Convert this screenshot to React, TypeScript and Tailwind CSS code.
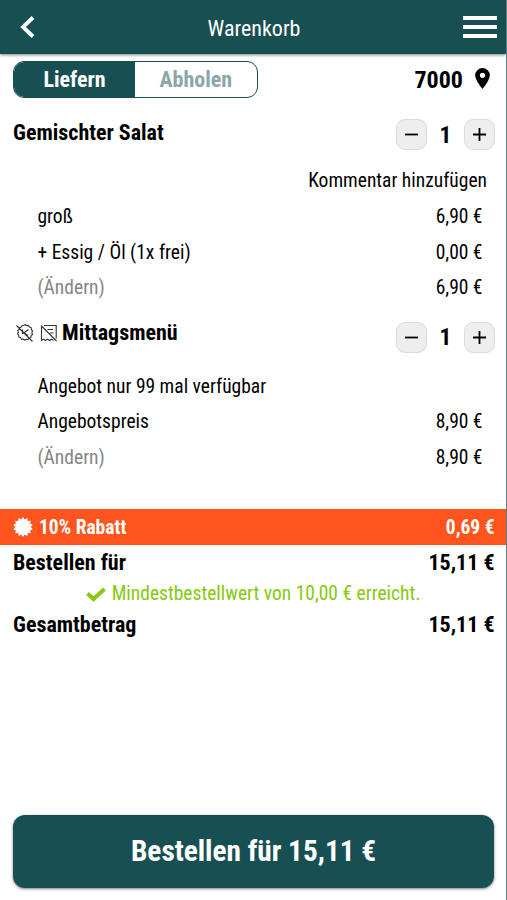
import type { ReactNode } from 'react';

function Stepper({ count }: { count: number }) {
  return (
    <div className="flex items-center">
      <button className="flex h-[31px] w-[31px] items-center justify-center rounded-[9px] border border-[#dcdcdc] bg-[#eeeeee]">
        <svg width="15" height="15" viewBox="0 0 15 15" stroke="#000" strokeWidth="1.8">
          <path d="M1 7.5h13" />
        </svg>
      </button>
      <span className="w-[37px] pt-[2px] text-center text-[23.5px] leading-none font-bold">{count}</span>
      <button className="flex h-[31px] w-[31px] items-center justify-center rounded-[9px] border border-[#dcdcdc] bg-[#eeeeee]">
        <svg width="15" height="15" viewBox="0 0 15 15" stroke="#000" strokeWidth="1.8">
          <path d="M1 7.5h13M7.5 1v13" />
        </svg>
      </button>
    </div>
  );
}

function ItemRow({ label, price, muted }: { label: ReactNode; price?: string; muted?: boolean }) {
  return (
    <div className="flex h-[35.5px] items-center justify-between pr-[23.5px] pl-[37.5px]">
      <span className={muted ? 'text-[#858585]' : ''}>{label}</span>
      <span>{price}</span>
    </div>
  );
}

function TotalRow({ label, price }: { label: string; price: string }) {
  return (
    <div className="flex h-8 items-center justify-between pr-[11.5px] pl-[13px] text-[22px] font-bold">
      <span>{label}</span>
      <span>{price}</span>
    </div>
  );
}

// round badge with a serrated edge
function SealIcon() {
  const points = Array.from({ length: 28 }, (_, i) => {
    const r = i % 2 ? 7.8 : 10;
    const a = (i * Math.PI) / 14 - Math.PI / 2;
    return `${(10 + r * Math.cos(a)).toFixed(2)},${(10 + r * Math.sin(a)).toFixed(2)}`;
  }).join(' ');
  return (
    <svg width="20" height="20" viewBox="0 0 20 20" fill="#fff">
      <polygon points={points} />
    </svg>
  );
}

function NoDiscountIcon() {
  return (
    <svg width="18" height="20" viewBox="0 0 18 20" fill="none" stroke="#333" strokeWidth="1.1">
      <path d="M9 1.500q1.500 1.600 3.400 1 .8 1.900 2.800 2.200-.3 2 1.300 3.300Q15.300 10 16.500 11.500q-1.800 1-1.700 3-2 .1-2.800 2-1.800-.8-3.200.6-1.400-1.400-3.300-.8-.6-2-2.600-2.300.3-2-1.300-3.200Q3 9 1.800 7.500q1.800-.9 1.800-2.900 2-.1 2.500-2Q7.800 3.200 9 1.500z" />
      <path d="M.5 2.500l16 16M6.500 6.500v4.500M7 10.500l5.500-4M8.500 10.300l3.500 2.200" />
    </svg>
  );
}

function NoReceiptIcon() {
  return (
    <svg width="18" height="20" viewBox="0 0 18 20" fill="none" stroke="#333" strokeWidth="1.1">
      <path d="M4 2.500h12.200v13M1.500 4v13.500l2-1.400 2 1.400 2-1.400 2 1.400 2-1.400 2 1.400M1 2.500l15.500 15.500M7.500 6.500h5.500M10 10h3.500" />
    </svg>
  );
}

export default function App() {
  return (
    <div className="flex h-[900px] w-[507px] flex-col overflow-hidden border-r border-[#617f83] bg-white font-['Roboto_Condensed','Roboto',sans-serif] text-[19.5px] leading-none whitespace-nowrap text-black [font-stretch:75%]">
      <header className="flex h-[54px] shrink-0 items-center justify-between bg-[#184f52] pr-[9px] pl-5 text-[22px] text-white shadow-[0_1px_3px_rgba(0,0,0,0.5)]">
        <svg width="16" height="22" viewBox="0 0 16 22" fill="none" stroke="#fff" strokeWidth="3.800">
          <path d="M13 1.500L3 11l10 9.500" />
        </svg>
        <h1 className="pt-1 pl-[9px]">Warenkorb</h1>
        <div className="flex flex-col gap-[5px]">
          <span className="h-1 w-[34px] bg-white" />
          <span className="h-1 w-[34px] bg-white" />
          <span className="h-1 w-[34px] bg-white" />
        </div>
      </header>

      <div className="mt-[7px] flex h-[37px] shrink-0 items-center justify-between pr-4 pl-[13px] font-bold">
        <div className="flex h-[37px] w-[244.5px] overflow-hidden rounded-[11px] border border-[#184f52] text-[22px]">
          <button className="w-[121px] bg-[#184f52] text-white">Liefern</button>
          <button className="flex-1 text-[#8ba7a8]">Abholen</button>
        </div>
        <div className="flex items-center gap-3 text-[24px]">
          <span>7000</span>
          <svg className="mb-[2px]" width="15" height="21" viewBox="0 0 14 20">
            <path
              fillRule="evenodd"
              d="M7 0a7 7 0 0 0-7 7c0 5 7 13 7 13s7-8 7-13a7 7 0 0 0-7-7zm0 4.500a2.500 2.500 0 1 1 0 5 2.500 2.500 0 0 1 0-5z"
            />
          </svg>
        </div>
      </div>

      <section className="mt-[21px]">
        <div className="flex items-start justify-between pr-[11px] pl-[13px]">
          <h2 className="pt-[3px] text-[22px] font-bold">Gemischter Salat</h2>
          <Stepper count={1} />
        </div>
        <div className="mt-[13px] flex h-9 items-center justify-end pr-[19px]">Kommentar hinzufügen</div>
        <ItemRow label="groß" price="6,90 €" />
        <ItemRow label="+ Essig / Öl (1x frei)" price="0,00 €" />
        <ItemRow label="(Ändern)" price="6,90 €" muted />
      </section>

      <section className="mt-4">
        <div className="flex items-start justify-between pr-[11px] pl-4">
          <h2 className="flex items-center text-[22px] font-bold">
            <NoDiscountIcon />
            <span className="w-[6px]" />
            <NoReceiptIcon />
            <span className="ml-1">Mittagsmenü</span>
          </h2>
          <Stepper count={1} />
        </div>
        <div className="h-4" />
        <ItemRow label="Angebot nur 99 mal verfügbar" />
        <ItemRow label="Angebotspreis" price="8,90 €" />
        <ItemRow label="(Ändern)" price="8,90 €" muted />
      </section>

      <div className="mt-[34px] flex h-9 shrink-0 items-center bg-[#ff541d] pr-[11.5px] pl-[13px] font-bold text-white">
        <SealIcon />
        <span className="ml-[6px] pt-px">10% Rabatt</span>
        <span className="ml-auto pt-px">0,69 €</span>
      </div>
      <div className="pt-[2px]">
        <TotalRow label="Bestellen für" price="15,11 €" />
      </div>
      <div className="flex h-[30px] items-center justify-center gap-[6px] text-[#86c90e]">
        <svg width="20" height="15" viewBox="0 0 20 15" fill="none" stroke="currentColor" strokeWidth="4">
          <path d="M1.500 6.500l6 5.500L18.500 2" />
        </svg>
        <span>Mindestbestellwert von 10,00 € erreicht.</span>
      </div>
      <TotalRow label="Gesamtbetrag" price="15,11 €" />

      <button className="mt-auto mr-3 mb-3 ml-[13px] h-[73px] shrink-0 rounded-[12px] bg-[#184f52] text-[29.3px] font-bold text-white shadow-[0_1px_3px_rgba(0,0,0,0.5)]">
        Bestellen für 15,11 €
      </button>
    </div>
  );
}
